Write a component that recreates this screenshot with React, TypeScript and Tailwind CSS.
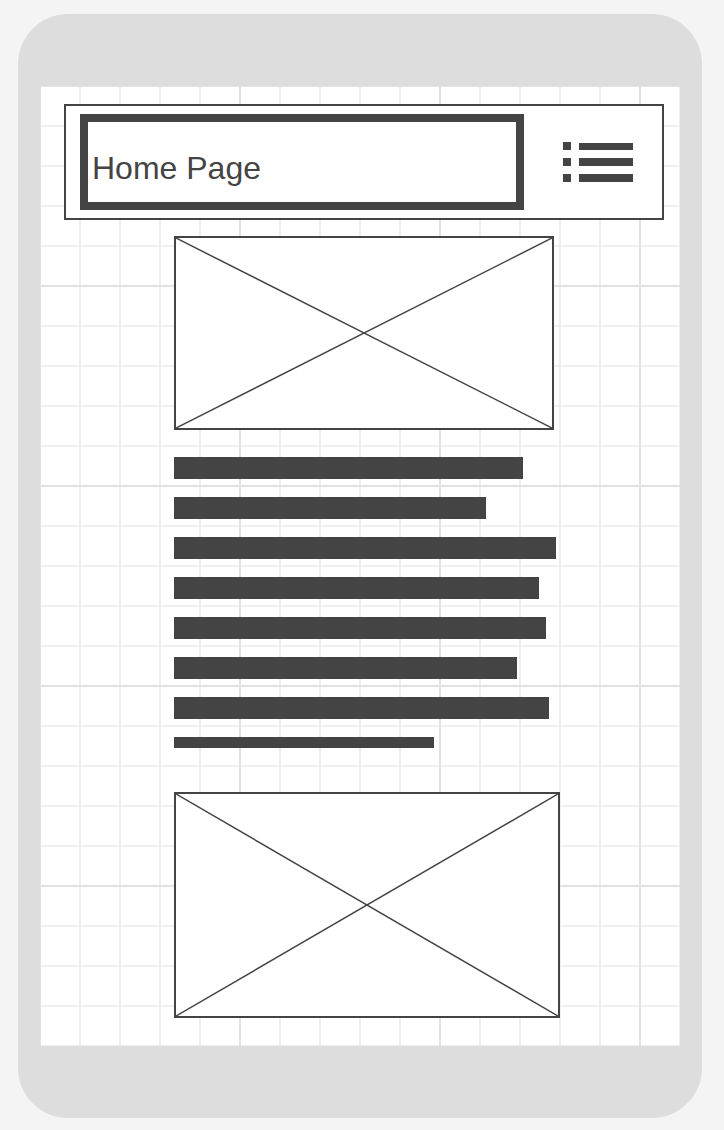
import React from 'react';

const ImagePlaceholder = ({ w, h }: { w: number; h: number }) => {
  return (
    <div className="relative border-2 border-[#444444] bg-white" style={{ width: w, height: h }}>
      <svg className="absolute inset-0 w-full h-full" viewBox={`0 0 ${w - 4} ${h - 4}`} preserveAspectRatio="none">
        <line x1="0" y1="0" x2={w - 4} y2={h - 4} stroke="#444444" strokeWidth="1.5" />
        <line x1={w - 4} y1="0" x2="0" y2={h - 4} stroke="#444444" strokeWidth="1.5" />
      </svg>
    </div>
  );
};

const MenuIcon = () => (
  <svg width="70" height="40" viewBox="0 0 70 40" fill="#444444">
    <rect x="0" y="0" width="8" height="8" />
    <rect x="16" y="1" width="54" height="7" />
    <rect x="0" y="16" width="8" height="8" />
    <rect x="16" y="16" width="54" height="8" />
    <rect x="0" y="32" width="8" height="8" />
    <rect x="16" y="32" width="54" height="8" />
  </svg>
);

const bars = [349, 312, 382, 365, 372, 343, 375];

const App = () => {
  return (
    <div className="w-[724px] h-[1130px] bg-[#f4f4f4] pt-[14px] pl-[18px] font-['Liberation_Sans',Arial,sans-serif]">
      {/* Phone body */}
      <div className="w-[684px] h-[1104px] bg-[#dddddd] rounded-[50px] pt-[72px] px-[22px]">
        {/* Screen with grid */}
        <div className="w-[640px] h-[960px] bg-white bg-[linear-gradient(to_right,#e2e2e2_1px,transparent_1px,transparent_199px,#e2e2e2_199px),linear-gradient(to_bottom,#e2e2e2_1px,transparent_1px,transparent_199px,#e2e2e2_199px),linear-gradient(to_right,#eeeeee_1px,transparent_1px,transparent_39px,#eeeeee_39px),linear-gradient(to_bottom,#eeeeee_1px,transparent_1px,transparent_39px,#eeeeee_39px)] bg-[size:200px_200px,200px_200px,40px_40px,40px_40px] pt-[18px] px-[24px]">
          {/* Header */}
          <div className="w-[600px] h-[116px] border-2 border-[#444444] bg-white flex items-start pt-[8px] pl-[14px]">
            <div className="w-[444px] h-[96px] border-[8px] border-[#444444] pt-[28px] pl-[4px]">
              <span className="text-[32px] leading-[1.15] text-[#444444]">Home Page</span>
            </div>
            <div className="ml-[39px] mt-[28px]">
              <MenuIcon />
            </div>
          </div>

          {/* Content column */}
          <div className="pl-[110px] pt-[16px] flex flex-col">
            <ImagePlaceholder w={380} h={194} />
            <div className="flex flex-col gap-[18px] mt-[27px]">
              {bars.map((w, i) => (
                <div key={i} className="h-[22px] bg-[#444444]" style={{ width: w }} />
              ))}
              <div className="h-[11px] w-[260px] bg-[#444444]" />
            </div>
            <div className="mt-[44px]">
              <ImagePlaceholder w={386} h={226} />
            </div>
          </div>
        </div>
      </div>
    </div>
  );
};

export default App;
